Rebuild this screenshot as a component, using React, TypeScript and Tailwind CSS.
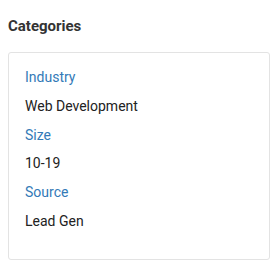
const items = [
  { label: "Industry", value: "Web Development" },
  { label: "Size", value: "10-19" },
  { label: "Source", value: "Lead Gen" },
];

export default function App() {
  return (
    <div className="w-[280px] h-[280px] bg-white px-2 pt-4 font-['Roboto',sans-serif]">
      <h2 className="text-[15px] leading-[21px] font-bold text-[#333333] mb-[15px]">Categories</h2>
      <div className="w-[262px] h-[208px] border border-[#e3e3e3] rounded-[3px] px-4 pt-[10px]">
        {items.map((item) => (
          <div key={item.label}>
            <div className="text-[14px] leading-[28.8px] text-[#337ab7]">{item.label}</div>
            <div className="text-[14px] leading-[28.8px] text-[#222222]">{item.value}</div>
          </div>
        ))}
      </div>
    </div>
  );
}
